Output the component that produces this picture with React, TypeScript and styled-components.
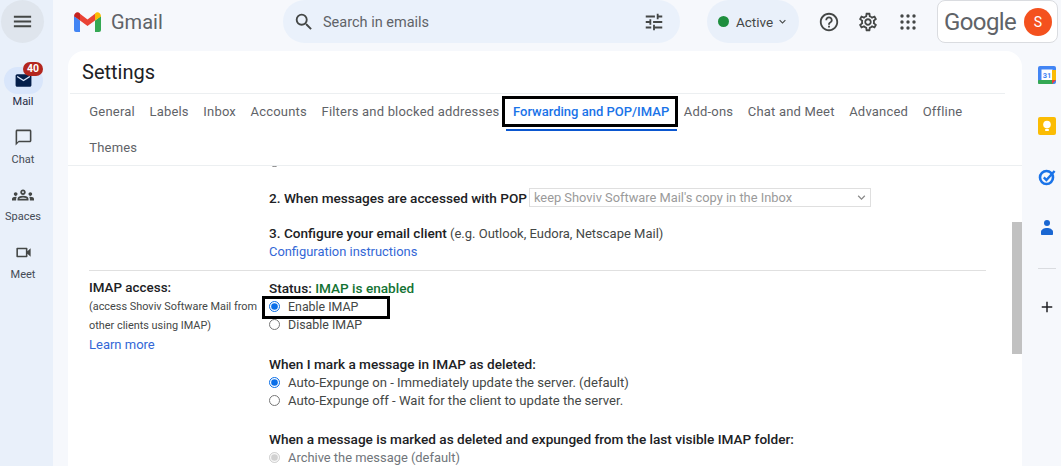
import React from "react";
import styled, { createGlobalStyle } from "styled-components";
import { MdMenu, MdSearch, MdTune, MdHelpOutline, MdOutlineSettings, MdKeyboardArrowDown, MdOutlineChatBubbleOutline, MdOutlineVideocam, MdOutlineGroups, MdMail, MdAdd } from "react-icons/md";

const Global = createGlobalStyle`
  html, body { margin: 0; padding: 0; height: 100%; overflow: hidden; background: #f6f8fc; }
  #root { height: 466px; }
  * { box-sizing: border-box; }
  body { font-family: Roboto, "Liberation Sans", sans-serif; color: #202124; }
`;

const Page = styled.div`
  display: flex;
  width: 1061px;
  height: 466px;
  overflow: hidden;
  background: #f6f8fc;
`;
const Rail = styled.nav`
  width: 53px;
  flex: none;
  background: #e9f0fa;
  display: flex;
  flex-direction: column;
  align-items: center;
`;
const MenuButton = styled.div`
  width: 43px;
  height: 43px;
  border-radius: 50%;
  background: #dfe5ed;
  margin: 0 0 24px -8px;
  color: #444746;
  display: flex;
  align-items: center;
  justify-content: center;
  font-size: 23px;
`;
const RailItem = styled.div`
  position: relative;
  height: 57.7px;
  width: 53px;
  padding-right: 7px;
  display: flex;
  flex-direction: column;
  align-items: center;
`;
const RailIcon = styled.div<{ $active?: boolean }>`
  width: 39px;
  height: 27px;
  padding-bottom: ${(p) => (p.$active ? 0 : 2)}px;
  border-radius: 14px;
  background: ${(p) => (p.$active ? "#d9e6fb" : "transparent")};
  color: ${(p) => (p.$active ? "#041e49" : "#444746")};
  display: flex;
  align-items: center;
  justify-content: center;
  font-size: 19px;
`;
const RailLabel = styled.span<{ $active?: boolean }>`
  font-size: 11px;
  line-height: 16px;
  color: ${(p) => (p.$active ? "#1f2a44" : "#444b55")};
`;
const Badge = styled.span`
  position: absolute;
  left: 23px;
  top: -5px;
  width: 20px;
  height: 14px;
  border-radius: 7px;
  background: #b3261e;
  color: #fff;
  font-size: 10.5px;
  font-weight: 700;
  line-height: 14px;
  text-align: center;
`;
const Main = styled.div`
  flex: 1;
  min-width: 0;
  display: flex;
  flex-direction: column;
`;
const Header = styled.header`
  height: 51px;
  flex: none;
  display: flex;
  align-items: flex-start;
`;
const Brand = styled.div`
  width: 230px;
  height: 43px;
  flex: none;
  padding-left: 21px;
  display: flex;
  align-items: center;
  gap: 10px;
`;
const Wordmark = styled.span`
  font-size: 20px;
  color: #5f6368;
`;
const Search = styled.div`
  width: 397px;
  height: 43px;
  flex: none;
  border-radius: 22px;
  background: #eaf1fb;
  display: flex;
  align-items: center;
  padding: 0 15px 0 10px;
  color: #444746;
  font-size: 22px;
`;
const SearchText = styled.span`
  flex: 1;
  margin-left: 8px;
  padding-top: 2px;
  font-size: 14.5px;
  color: #5f6368;
`;
const ActivePill = styled.div`
  width: 92px;
  height: 43px;
  flex: none;
  margin-left: 27px;
  border-radius: 22px;
  background: #e9f0fa;
  display: flex;
  align-items: center;
  padding-left: 11px;
  font-size: 13.5px;
  font-weight: 400;
  color: #444746;
`;
const Dot = styled.span`
  width: 11px;
  height: 11px;
  border-radius: 50%;
  background: #1e8e3e;
  margin-right: 7px;
`;
const ActiveChevron = styled(MdKeyboardArrowDown)`
  margin-left: 3px;
`;
const HeadIcons = styled.div`
  width: 138px;
  height: 43px;
  flex: none;
  display: flex;
  align-items: center;
  padding-left: 19px;
  gap: 17px;
  color: #444746;
  font-size: 22px;
`;
const AppsWrap = styled.span`
  display: flex;
  margin-left: 4px;
`;
const GoogleBox = styled.div`
  width: 121px;
  height: 43px;
  flex: none;
  background: #fff;
  border: 1px solid #dadce0;
  border-radius: 8px;
  display: flex;
  align-items: center;
  justify-content: space-between;
  padding: 0 5px 0 6px;
`;
const GoogleWord = styled.span`
  font-size: 24px;
  letter-spacing: -0.6px;
  color: #5f6368;
`;
const Avatar = styled.span`
  width: 28px;
  height: 28px;
  border-radius: 50%;
  background: #f4511e;
  color: #fff;
  font-size: 14px;
  display: flex;
  align-items: center;
  justify-content: center;
`;
const Body = styled.div`
  flex: 1;
  display: flex;
  min-height: 0;
  padding-left: 15px;
`;
const Card = styled.main`
  position: relative;
  width: 954px;
  flex: none;
  background: #fff;
  border-radius: 16px 16px 0 0;
  display: flex;
  flex-direction: column;
  overflow: hidden;
`;
const Title = styled.h1`
  margin: 0 17px 0 2px;
  height: 43px;
  padding-left: 12px;
  font-size: 20px;
  font-weight: 400;
  line-height: 42px;
  color: #202124;
  border-bottom: 1px solid #eceff1;
`;
const Tabs = styled.div`
  width: 920px;
  height: 71px;
  flex: none;
  padding-left: 14px;
  display: flex;
  flex-wrap: wrap;
  align-content: flex-start;
`;
const Tab = styled.div<{ $active?: boolean }>`
  position: relative;
  height: 36px;
  padding: 0 7.3px;
  margin-left: ${(p) => (p.$active ? -1 : 0)}px;
  line-height: 35px;
  font-size: 13px;
  letter-spacing: ${(p) => (p.$active ? 0 : 0.19)}px;
  font-weight: ${(p) => (p.$active ? 500 : 400)};
  color: ${(p) => (p.$active ? "#1a73e8" : "#5f6368")};
`;
const TabLine = styled.span`
  position: absolute;
  left: 0;
  right: 0;
  bottom: -1px;
  height: 2px;
  background: #0b57d0;
`;
const Highlight = styled.span`
  position: absolute;
  border: 3px solid #000;
  pointer-events: none;
`;
const TabHighlight = styled(Highlight)`
  left: -4px;
  top: 2px;
  width: 176px;
  height: 31px;
`;
const ImapHighlight = styled(Highlight)`
  left: -7px;
  top: -1px;
  width: 128px;
  height: 23px;
`;
const Scroller = styled.div`
  flex: 1;
  min-height: 0;
  overflow: hidden;
  border-top: 1px solid #eceff1;
  padding: 0 36px 0 21px;
`;
const Clipped = styled.div`
  height: 30px;
  margin: -14px 0 7px;
  padding-left: 180px;
`;
const Section = styled.div<{ $line?: boolean }>`
  display: grid;
  grid-template-columns: 180px 1fr;
  ${(p) => p.$line && "border-top: 1px solid #e0e0e0; margin-top: 9px;"}
`;
const Side = styled.div`
  padding-top: 8px;
`;
const SideTitle = styled.div`
  font-weight: 500;
  font-size: 13.4px;
  line-height: 18px;
  color: #202124;
`;
const SideNote = styled.div`
  font-size: 10.9px;
  line-height: 18.5px;
  margin-top: 1px;
  color: #444746;
`;
const LearnMore = styled.a`
  display: block;
  font-size: 13px;
  line-height: 18px;
  margin-top: 1px;
  color: #3367d6;
`;
const Options = styled.div`
  padding-top: 8px;
`;
const Line = styled.div<{ $gap?: number }>`
  height: 18px;
  line-height: 18px;
  white-space: nowrap;
  font-size: 13px;
  color: #202124;
  margin-top: ${(p) => p.$gap ?? 0}px;
`;
const SelectLine = styled(Line)`
  display: flex;
  align-items: center;
`;
const Strong = styled.b`
  font-weight: 500;
  font-size: 13.6px;
`;
const Enabled = styled.span`
  color: #137333;
`;
const Muted = styled.span`
  color: #444746;
`;
const Link = styled.a`
  font-size: 12.9px;
  color: #3367d6;
`;
const FauxSelect = styled.span`
  display: flex;
  flex: none;
  align-items: center;
  justify-content: space-between;
  width: 342px;
  height: 19px;
  margin: -1px 0 0 2px;
  padding: 0 1px 0 4px;
  border: 1px solid #dfdfdf;
  font-size: 12.85px;
  color: #9a9a9a;
`;
const RadioRow = styled.label<{ $off?: boolean; $size?: number }>`
  position: relative;
  display: flex;
  align-items: center;
  height: 18.5px;
  font-size: ${(p) => p.$size ?? 13.1}px;
  color: ${(p) => (p.$off ? "#70757a" : "#444746")};
`;
const Radio = styled.input.attrs({ type: "radio" })`
  width: 11px;
  height: 11px;
  margin: 0 8px 0 0;
  flex: none;
  accent-color: #0b6fe8;
`;
const RightRail = styled.aside`
  flex: 1;
  padding: 15px 0 0 16px;
  display: flex;
  flex-direction: column;
  align-items: flex-start;
`;
const AddonSlot = styled.div`
  width: 18px;
  height: 18px;
  margin-bottom: 33px;
  display: flex;
  align-items: center;
  justify-content: center;
`;
const AddonDivider = styled.div`
  width: 18px;
  height: 1px;
  background: #dadce0;
  margin: -2px 0 29px;
`;
const Thumb = styled.div`
  position: absolute;
  right: 0;
  top: 171px;
  width: 10px;
  height: 132px;
  background: #c1c1c1;
`;

const GmailLogo = () => (
  <svg width="27" height="20" viewBox="0 0 27 20">
    <path d="M0 4v14a2 2 0 0 0 2 2h4V8.500z" fill="#4285f4" />
    <path d="M27 4v14a2 2 0 0 1-2 2h-4V8.500z" fill="#34a853" />
    <path d="M6 8.500 13.500 14 21 8.500V1.800L13.500 7.400 6 1.800z" fill="#ea4335" />
    <path d="M0 4.500C0 1 3.500-1 6 1.400V8.500L0 4.200z" fill="#c5221f" />
    <path d="M21 1.400C23.500-1 27 1 27 4.500L21 8.500z" fill="#fbbc04" />
  </svg>
);
const AppsIcon = () => (
  <svg width="16" height="16" viewBox="0 0 16 16" fill="#444746">
    {[2, 8, 14].flatMap((y) => [2, 8, 14].map((x) => <circle key={`${x}-${y}`} cx={x} cy={y} r="1.7" />))}
  </svg>
);
const Calendar = () => (
  <svg width="18" height="18" viewBox="0 0 18 18">
    <rect width="18" height="18" rx="2" fill="#4285f4" />
    <rect x="3.500" y="3.500" width="11" height="11" fill="#fff" />
    <rect x="14" y="4" width="4" height="10" fill="#fbbc04" />
    <rect y="14" width="15" height="4" rx="1" fill="#34a853" />
    <path d="M14 14h4l-4 4z" fill="#ea4335" />
    <text x="9" y="12.400" fontSize="7.500" fontWeight="700" textAnchor="middle" fill="#4285f4" fontFamily="Roboto">31</text>
  </svg>
);
const Keep = () => (
  <svg width="18" height="18" viewBox="0 0 18 18">
    <rect width="18" height="18" rx="2" fill="#fbbc04" />
    <circle cx="9" cy="7.600" r="3.800" fill="#fff" />
    <rect x="7.200" y="12" width="3.600" height="2" fill="#fff" />
  </svg>
);
const TasksIcon = () => (
  <svg width="18" height="18" viewBox="0 0 18 18" fill="none">
    <circle cx="8.500" cy="9.500" r="6.500" stroke="#1a73e8" strokeWidth="2.600" />
    <path d="M5.800 9.400 8.400 12 16.600 3" stroke="#1a73e8" strokeWidth="2.400" />
  </svg>
);
const ContactsIcon = () => (
  <svg width="18" height="18" viewBox="0 0 18 18" fill="#1a67d2">
    <circle cx="9" cy="4" r="3" />
    <path d="M3 15v-2c0-2.500 3-4 6-4s6 1.500 6 4v2c0 .6-.4 1-1 1H4c-.6 0-1-.4-1-1z" />
  </svg>
);

export default function App() {
  return (
    <Page>
      <Global />
      <Rail>
        <MenuButton><MdMenu /></MenuButton>
        <RailItem>
          <RailIcon $active><MdMail /></RailIcon>
          <RailLabel $active>Mail</RailLabel>
          <Badge>40</Badge>
        </RailItem>
        <RailItem>
          <RailIcon><MdOutlineChatBubbleOutline /></RailIcon>
          <RailLabel>Chat</RailLabel>
        </RailItem>
        <RailItem>
          <RailIcon><MdOutlineGroups size={22} /></RailIcon>
          <RailLabel>Spaces</RailLabel>
        </RailItem>
        <RailItem>
          <RailIcon><MdOutlineVideocam /></RailIcon>
          <RailLabel>Meet</RailLabel>
        </RailItem>
      </Rail>
      <Main>
        <Header>
          <Brand>
            <GmailLogo />
            <Wordmark>Gmail</Wordmark>
          </Brand>
          <Search>
            <MdSearch />
            <SearchText>Search in emails</SearchText>
            <MdTune />
          </Search>
          <ActivePill>
            <Dot />
            Active
            <ActiveChevron size={13} />
          </ActivePill>
          <HeadIcons>
            <MdHelpOutline />
            <MdOutlineSettings />
            <AppsWrap><AppsIcon /></AppsWrap>
          </HeadIcons>
          <GoogleBox>
            <GoogleWord>Google</GoogleWord>
            <Avatar>S</Avatar>
          </GoogleBox>
        </Header>
        <Body>
          <Card>
            <Title>Settings</Title>
            <Tabs>
              <Tab>General</Tab>
              <Tab>Labels</Tab>
              <Tab>Inbox</Tab>
              <Tab>Accounts</Tab>
              <Tab>Filters and blocked addresses</Tab>
              <Tab $active>
                Forwarding and POP/IMAP
                <TabLine />
                <TabHighlight />
              </Tab>
              <Tab>Add-ons</Tab>
              <Tab>Chat and Meet</Tab>
              <Tab>Advanced</Tab>
              <Tab>Offline</Tab>
              <Tab>Themes</Tab>
            </Tabs>
            <Scroller>
              <Clipped>
                <RadioRow><Radio name="pop" /></RadioRow>
              </Clipped>
              <Section>
                <div />
                <div>
                  <SelectLine>
                    <Strong>2. When messages are accessed with POP</Strong>
                    <FauxSelect>
                      keep Shoviv Software Mail's copy in the Inbox
                      <MdKeyboardArrowDown size={15} color="#8a8a8a" />
                    </FauxSelect>
                  </SelectLine>
                  <Line $gap={17}><Strong>3. Configure your email client</Strong> <Muted>(e.g. Outlook, Eudora, Netscape Mail)</Muted></Line>
                  <Line $gap={1}><Link>Configuration instructions</Link></Line>
                </div>
              </Section>
              <Section $line>
                <Side>
                  <SideTitle>IMAP access:</SideTitle>
                  <SideNote>(access Shoviv Software Mail from other clients using IMAP)</SideNote>
                  <LearnMore>Learn more</LearnMore>
                </Side>
                <Options>
                  <Line><Strong>Status: <Enabled>IMAP is enabled</Enabled></Strong></Line>
                  <RadioRow $size={12.4}>
                    <ImapHighlight />
                    <Radio name="imap" defaultChecked />Enable IMAP
                  </RadioRow>
                  <RadioRow $size={12.4}><Radio name="imap" />Disable IMAP</RadioRow>
                  <Line $gap={21}><Strong>When I mark a message in IMAP as deleted:</Strong></Line>
                  <RadioRow><Radio name="exp" defaultChecked />Auto-Expunge on - Immediately update the server. (default)</RadioRow>
                  <RadioRow><Radio name="exp" />Auto-Expunge off - Wait for the client to update the server.</RadioRow>
                  <Line $gap={20}><Strong>When a message is marked as deleted and expunged from the last visible IMAP folder:</Strong></Line>
                  <RadioRow $off $size={12.9}><Radio name="arch" defaultChecked disabled />Archive the message (default)</RadioRow>
                </Options>
              </Section>
            </Scroller>
            <Thumb />
          </Card>
          <RightRail>
            <AddonSlot><Calendar /></AddonSlot>
            <AddonSlot><Keep /></AddonSlot>
            <AddonSlot><TasksIcon /></AddonSlot>
            <AddonSlot><ContactsIcon /></AddonSlot>
            <AddonDivider />
            <AddonSlot><MdAdd size={20} color="#202124" /></AddonSlot>
          </RightRail>
        </Body>
      </Main>
    </Page>
  );
}
